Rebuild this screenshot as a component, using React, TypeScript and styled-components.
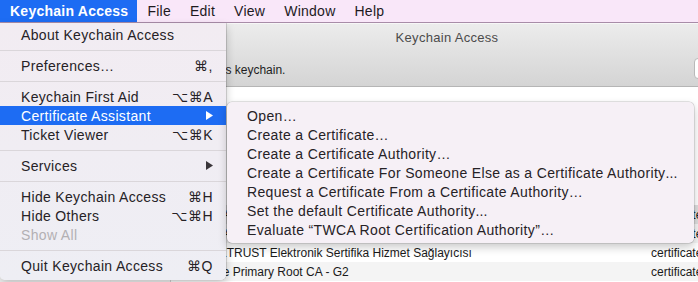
import React from "react";
import styled, { createGlobalStyle } from "styled-components";

const GlobalStyle = createGlobalStyle`
  html, body { margin: 0; padding: 0; }
  body {
    width: 698px;
    height: 282px;
    overflow: hidden;
    background: #ffffff;
    font-family: "Liberation Sans", "DejaVu Sans", Arial, sans-serif;
  }
`;

const Screen = styled.div`
  position: relative;
  width: 698px;
  height: 282px;
  overflow: hidden;
  display: flex;
  flex-direction: column;
`;

const MenuBar = styled.div`
  flex: none;
  height: 22px;
  display: flex;
  align-items: stretch;
  background: #f9e7f9;
  border-bottom: 1px solid #a88ca8;
  font-size: 14px;
  letter-spacing: 0.25px;
  color: #1e1a1e;
`;

const BarItem = styled.div<{ $active?: boolean }>`
  display: flex;
  align-items: center;
  padding: 0 9px 0 10px;
  background: ${(p) => (p.$active ? "#1d6cf3" : "transparent")};
  color: ${(p) => (p.$active ? "#ffffff" : "#1e1a1e")};
  font-weight: ${(p) => (p.$active ? 700 : 400)};
`;

const Window = styled.div`
  flex: none;
  width: 894px;
  display: flex;
  flex-direction: column;
  background: #ffffff;
`;

const TitleBar = styled.div`
  height: 62px;
  display: flex;
  flex-direction: column;
  background: linear-gradient(#ececec, #d4d4d4);
  border-top: 1px solid #f7f7f7;
  border-bottom: 1px solid #b5b5b5;
`;

const TitleRow = styled.div`
  height: 26px;
  display: flex;
  align-items: center;
  justify-content: center;
  font-size: 13px;
  letter-spacing: 0.3px;
  color: #4b4b4b;
`;

const Toolbar = styled.div`
  flex: 1;
  display: flex;
  align-items: center;
  padding: 0 14px 0 22px;
  gap: 10px;
`;

const ToolbarText = styled.span`
  font-size: 12px;
  color: #1e1e1e;
  margin-top: 3px;
`;

const SearchField = styled.div`
  margin-left: auto;
  width: 186px;
  height: 21px;
  box-sizing: border-box;
  background: #ffffff;
  border: 1px solid #b9b9b9;
  border-radius: 4px;
`;

const Body = styled.div`
  display: flex;
  height: 200px;
`;

const Sidebar = styled.div`
  width: 170px;
  flex: none;
  background: #f4f4f4;
  border-right: 1px solid #d0d0d0;
`;

const List = styled.div`
  flex: 1;
  display: flex;
  flex-direction: column;
  padding-top: 118px;
`;

const Row = styled.div<{ $stripe?: boolean; $selected?: boolean }>`
  height: 19px;
  display: grid;
  grid-template-columns: 23px 457px 1fr;
  align-items: center;
  font-size: 12px;
  color: #1a1a1a;
  background: ${(p) => (p.$selected ? "#dedede" : p.$stripe ? "#f4f4f4" : "#ffffff")};
`;

const Cell = styled.span`
  white-space: nowrap;
  overflow: hidden;
`;

/* Menus (overlays) */

const MainMenu = styled.div`
  position: absolute;
  left: 0;
  top: 23px;
  width: 226px;
  padding: 2px 0 5px;
  box-sizing: border-box;
  background: linear-gradient(#f2ecf2, #eeeef4);
  border-radius: 0 0 5px 5px;
  box-shadow: 0.5px 0 0 rgba(0, 0, 0, 0.28), 0 4px 10px rgba(0, 0, 0, 0.22);
  font-size: 14px;
  letter-spacing: 0.33px;
  color: #262226;
  z-index: 2;
`;

const SubMenu = styled.div`
  position: absolute;
  left: 227px;
  top: 102px;
  width: 467px;
  padding: 4px 0;
  box-sizing: border-box;
  background: #f6f0f6;
  border-radius: 5px;
  box-shadow: 0 0 0 0.5px rgba(0, 0, 0, 0.2), 0 4px 10px rgba(0, 0, 0, 0.22);
  font-size: 14px;
  letter-spacing: 0.35px;
  color: #262226;
  z-index: 3;
`;

const Item = styled.div<{ $active?: boolean; $disabled?: boolean; $indent?: number }>`
  height: 19px;
  display: flex;
  align-items: center;
  justify-content: space-between;
  padding: 0 13px 0 ${(p) => p.$indent ?? 21}px;
  white-space: nowrap;
  background: ${(p) => (p.$active ? "#1d6cf3" : "transparent")};
  color: ${(p) => (p.$active ? "#ffffff" : p.$disabled ? "#b3b0b3" : "inherit")};
`;

const Dots = styled.span`
  letter-spacing: 0.1px;
`;

const Shortcut = styled.span`
  font-family: "Liberation Sans", "DejaVu Sans", sans-serif;
  letter-spacing: 0.5px;
`;

const Separator = styled.div`
  padding: 6px 0 5px;
  &::after {
    content: "";
    display: block;
    height: 1px;
    background: #dad6da;
  }
`;

const Arrow = ({ color }: { color: string }) => (
  <svg width="7" height="9" viewBox="0 0 7 9">
    <polygon points="0,0 7,4.5 0,9" fill={color} />
  </svg>
);

const LockIcon = () => (
  <svg width="24" height="24" viewBox="0 0 24 24">
    <rect x="4" y="10" width="16" height="12" rx="2" fill="#c9a53a" />
    <path d="M8 10V7a4 4 0 0 1 8 0v3" fill="none" stroke="#8a8a8a" strokeWidth="2" />
  </svg>
);

const rows = [
  { name: "TWCA Root Certification Authority", kind: "certificate" },
  { name: "TWCA Global Root CA", kind: "certificate" },
  { name: "TÜRKTRUST Elektronik Sertifika Hizmet Sağlayıcısı", kind: "certificate" },
  { name: "thawte Primary Root CA - G2", kind: "certificate" },
];

export default function App() {
  return (
    <>
      <GlobalStyle />
      <Screen>
        <MenuBar>
          <BarItem $active>Keychain Access</BarItem>
          <BarItem>File</BarItem>
          <BarItem>Edit</BarItem>
          <BarItem>View</BarItem>
          <BarItem>Window</BarItem>
          <BarItem>Help</BarItem>
        </MenuBar>

        <Window>
          <TitleBar>
            <TitleRow>Keychain Access</TitleRow>
            <Toolbar>
              <LockIcon />
              <ToolbarText>Click to unlock the System Roots keychain.</ToolbarText>
              <SearchField />
            </Toolbar>
          </TitleBar>
          <Body>
            <Sidebar />
            <List>
              {rows.map((r, i) => (
                <Row key={r.name} $stripe={i % 2 === 1} $selected={i === 0}>
                  <span />
                  <Cell>{r.name}</Cell>
                  <Cell>{r.kind}</Cell>
                </Row>
              ))}
            </List>
          </Body>
        </Window>

        <MainMenu>
          <Item>About Keychain Access</Item>
          <Separator />
          <Item>
            Preferences…<Shortcut>⌘,</Shortcut>
          </Item>
          <Separator />
          <Item>
            Keychain First Aid<Shortcut>⌥⌘A</Shortcut>
          </Item>
          <Item $active>
            Certificate Assistant<Arrow color="#ffffff" />
          </Item>
          <Item>
            Ticket Viewer<Shortcut>⌥⌘K</Shortcut>
          </Item>
          <Separator />
          <Item>
            Services<Arrow color="#3a363a" />
          </Item>
          <Separator />
          <Item>
            Hide Keychain Access<Shortcut>⌘H</Shortcut>
          </Item>
          <Item>
            Hide Others<Shortcut>⌥⌘H</Shortcut>
          </Item>
          <Item $disabled>Show All</Item>
          <Separator />
          <Item>
            Quit Keychain Access<Shortcut>⌘Q</Shortcut>
          </Item>
        </MainMenu>

        <SubMenu>
          <Item $indent={20}>Open…</Item>
          <Item $indent={20}>Create a Certificate…</Item>
          <Item $indent={20}>Create a Certificate Authority…</Item>
          <Item $indent={20}>
            <span>
              Create a Certificate For Someone Else as a Certificate Authority<Dots>...</Dots>
            </span>
          </Item>
          <Item $indent={20}>Request a Certificate From a Certificate Authority…</Item>
          <Item $indent={20}>
            <span>
              Set the default Certificate Authority<Dots>...</Dots>
            </span>
          </Item>
          <Item $indent={20}>Evaluate “TWCA Root Certification Authority”…</Item>
        </SubMenu>
      </Screen>
    </>
  );
}
